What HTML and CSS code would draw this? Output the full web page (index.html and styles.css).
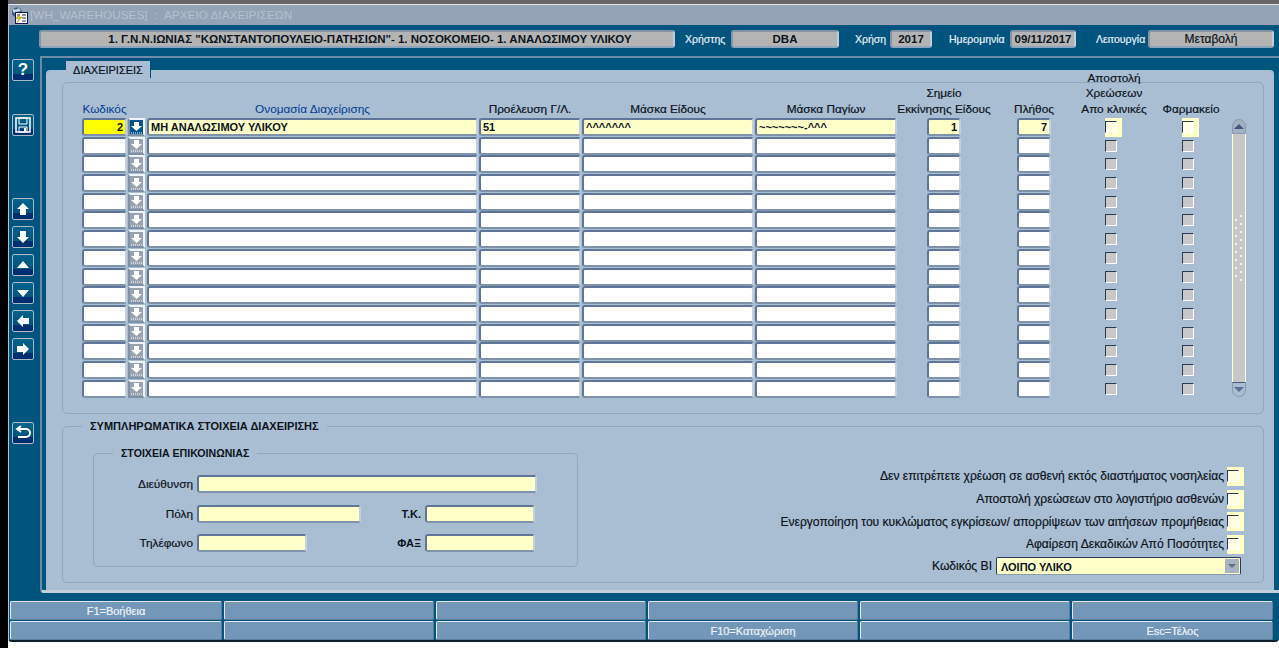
FILE: index.html
```html
<!DOCTYPE html>
<html lang="el">
<head>
    <meta charset="UTF-8">
    <title>[WH_WAREHOUSES] : ΑΡΧΕΙΟ ΔΙΑΧΕΙΡΙΣΕΩΝ</title>
    <link rel="stylesheet" href="styles.css">
</head>
<body>
    <svg class="defs" width="0" height="0">
        <symbol id="lov" viewBox="0 0 13 13">
            <path d="M4 1h5v4h3L6.500 10 1 5h3z" fill="#fff"/>
            <path d="M1 12h1M3 12h1M5 12h1M7 12h1M9 12h1M11 12h1" stroke="#fff" stroke-width="1"/>
        </symbol>
    </svg>

    <div class="edge"></div>
    <div class="screen">
        <div class="strip"></div>
        <div class="window">
            <div class="titlebar">
                <svg class="app-icon" width="17" height="17" viewBox="0 0 17 17">
                    <circle cx="6" cy="5.500" r="5" fill="#2b5c8c"/>
                    <path d="M2 2c2 1 4 0 6-1l2 3-4 1-1 2-3-2z" fill="#c8d4dc"/>
                    <rect x="4.500" y="5.500" width="12" height="11" fill="#fff" stroke="#101c50"/>
                    <path d="M6 8h3M11 8h4M11 11h4M11 14h4" stroke="#1c2c80"/>
                    <path d="M9 6.500l-4 5h3l-2 4 5-5.500H8z" fill="#f0d010" stroke="#806000" stroke-width=".4"/>
                </svg>
                <span class="title-text">[WH_WAREHOUSES]&nbsp; :&nbsp; ΑΡΧΕΙΟ ΔΙΑΧΕΙΡΙΣΕΩΝ</span>
            </div>

            <div class="header">
                <div class="info hospital">1. Γ.Ν.Ν.ΙΩΝΙΑΣ "ΚΩΝΣΤΑΝΤΟΠΟΥΛΕΙΟ-ΠΑΤΗΣΙΩΝ"- 1. ΝΟΣΟΚΟΜΕΙΟ- 1. ΑΝΑΛΩΣΙΜΟΥ ΥΛΙΚΟΥ</div>
                <span class="info-label label-user">Χρήστης</span>
                <div class="info user">DBA</div>
                <span class="info-label label-year">Χρήση</span>
                <div class="info year">2017</div>
                <span class="info-label label-date">Ημερομηνία</span>
                <div class="info date">09/11/2017</div>
                <span class="info-label label-mode">Λειτουργία</span>
                <div class="info mode">Μεταβολή</div>
            </div>

            <div class="workspace">
                <div class="toolbar">
                    <button class="tool help-tool">?</button>
                    <button class="tool save-tool">
                        <svg width="16" height="16" viewBox="0 0 16 16"><path d="M1 1h14v14H1z" fill="none" stroke="#fff" stroke-width="1.500"/><path d="M4 1h8v6H4zM4 10h8v5H4z" fill="none" stroke="#fff"/><path d="M9 11h2v3H9z" fill="#fff"/></svg>
                    </button>
                    <button class="tool nav-first">
                        <svg width="14" height="14" viewBox="0 0 14 14"><path d="M7 1l6 6H10v6H4V7H1z" fill="#fff"/></svg>
                    </button>
                    <button class="tool">
                        <svg width="14" height="14" viewBox="0 0 14 14"><path d="M4 1h6v6h3l-6 6-6-6h3z" fill="#fff"/></svg>
                    </button>
                    <button class="tool">
                        <svg width="14" height="14" viewBox="0 0 14 14"><path d="M7 3l6 7H1z" fill="#fff"/></svg>
                    </button>
                    <button class="tool">
                        <svg width="14" height="14" viewBox="0 0 14 14"><path d="M1 4h12l-6 7z" fill="#fff"/></svg>
                    </button>
                    <button class="tool">
                        <svg width="14" height="14" viewBox="0 0 14 14"><path d="M1 7l6-6v3h6v6H7v3z" fill="#fff"/></svg>
                    </button>
                    <button class="tool">
                        <svg width="14" height="14" viewBox="0 0 14 14"><path d="M13 7L7 1v3H1v6h6v3z" fill="#fff"/></svg>
                    </button>
                    <button class="tool undo-tool">
                        <svg width="16" height="16" viewBox="0 0 16 16"><path d="M6 1L2 4l4 3M3 4h8a3.500 3.500 0 0 1 0 8H3" fill="none" stroke="#fff" stroke-width="2"/></svg>
                    </button>
                </div>

                <div class="canvas">
                    <div class="tab">ΔΙΑΧΕΙΡΙΣΕΙΣ</div>
                    <div class="panel">
                        <div class="group list-group">
                            <div class="grid">
                                <div class="head blue">Κωδικός</div>
                                <div></div>
                                <div class="head blue">Ονομασία Διαχείρισης</div>
                                <div class="head">Προέλευση Γ/Λ.</div>
                                <div class="head">Μάσκα Είδους</div>
                                <div class="head w-mask">Μάσκα Παγίων</div>
                                <div class="head w-num">Σημείο<br>Εκκίνησης Είδους</div>
                                <div class="head w-num">Πλήθος</div>
                                <div class="head w-chk">Αποστολή<br>Χρεώσεων<br>Απο κλινικές</div>
                                <div class="head w-chk">Φαρμακείο</div>
                                <div class="scrollbar">
                                    <div class="scroll-btn scroll-up"></div>
                                    <div class="scroll-track"><div class="scroll-grip"></div></div>
                                    <div class="scroll-btn scroll-down"></div>
                                </div>

                                <div class="field code current">2</div><button class="lov active"><svg width="13" height="13"><use href="#lov"/></svg></button><div class="field req">ΜΗ ΑΝΑΛΩΣΙΜΟΥ ΥΛΙΚΟΥ</div><div class="field req">51</div><div class="field req">^^^^^^^</div><div class="field req w-mask">~~~~~~~-^^^</div><div class="field req num w-num">1</div><div class="field req num w-num">7</div><div class="chk-on"><span></span></div><div class="chk-on"><span></span></div>
                                <div class="field"></div><button class="lov"><svg width="13" height="13"><use href="#lov"/></svg></button><div class="field"></div><div class="field"></div><div class="field"></div><div class="field w-mask"></div><div class="field w-num"></div><div class="field w-num"></div><div class="chk"></div><div class="chk"></div>
                                <div class="field"></div><button class="lov"><svg width="13" height="13"><use href="#lov"/></svg></button><div class="field"></div><div class="field"></div><div class="field"></div><div class="field w-mask"></div><div class="field w-num"></div><div class="field w-num"></div><div class="chk"></div><div class="chk"></div>
                                <div class="field"></div><button class="lov"><svg width="13" height="13"><use href="#lov"/></svg></button><div class="field"></div><div class="field"></div><div class="field"></div><div class="field w-mask"></div><div class="field w-num"></div><div class="field w-num"></div><div class="chk"></div><div class="chk"></div>
                                <div class="field"></div><button class="lov"><svg width="13" height="13"><use href="#lov"/></svg></button><div class="field"></div><div class="field"></div><div class="field"></div><div class="field w-mask"></div><div class="field w-num"></div><div class="field w-num"></div><div class="chk"></div><div class="chk"></div>
                                <div class="field"></div><button class="lov"><svg width="13" height="13"><use href="#lov"/></svg></button><div class="field"></div><div class="field"></div><div class="field"></div><div class="field w-mask"></div><div class="field w-num"></div><div class="field w-num"></div><div class="chk"></div><div class="chk"></div>
                                <div class="field"></div><button class="lov"><svg width="13" height="13"><use href="#lov"/></svg></button><div class="field"></div><div class="field"></div><div class="field"></div><div class="field w-mask"></div><div class="field w-num"></div><div class="field w-num"></div><div class="chk"></div><div class="chk"></div>
                                <div class="field"></div><button class="lov"><svg width="13" height="13"><use href="#lov"/></svg></button><div class="field"></div><div class="field"></div><div class="field"></div><div class="field w-mask"></div><div class="field w-num"></div><div class="field w-num"></div><div class="chk"></div><div class="chk"></div>
                                <div class="field"></div><button class="lov"><svg width="13" height="13"><use href="#lov"/></svg></button><div class="field"></div><div class="field"></div><div class="field"></div><div class="field w-mask"></div><div class="field w-num"></div><div class="field w-num"></div><div class="chk"></div><div class="chk"></div>
                                <div class="field"></div><button class="lov"><svg width="13" height="13"><use href="#lov"/></svg></button><div class="field"></div><div class="field"></div><div class="field"></div><div class="field w-mask"></div><div class="field w-num"></div><div class="field w-num"></div><div class="chk"></div><div class="chk"></div>
                                <div class="field"></div><button class="lov"><svg width="13" height="13"><use href="#lov"/></svg></button><div class="field"></div><div class="field"></div><div class="field"></div><div class="field w-mask"></div><div class="field w-num"></div><div class="field w-num"></div><div class="chk"></div><div class="chk"></div>
                                <div class="field"></div><button class="lov"><svg width="13" height="13"><use href="#lov"/></svg></button><div class="field"></div><div class="field"></div><div class="field"></div><div class="field w-mask"></div><div class="field w-num"></div><div class="field w-num"></div><div class="chk"></div><div class="chk"></div>
                                <div class="field"></div><button class="lov"><svg width="13" height="13"><use href="#lov"/></svg></button><div class="field"></div><div class="field"></div><div class="field"></div><div class="field w-mask"></div><div class="field w-num"></div><div class="field w-num"></div><div class="chk"></div><div class="chk"></div>
                                <div class="field"></div><button class="lov"><svg width="13" height="13"><use href="#lov"/></svg></button><div class="field"></div><div class="field"></div><div class="field"></div><div class="field w-mask"></div><div class="field w-num"></div><div class="field w-num"></div><div class="chk"></div><div class="chk"></div>
                                <div class="field"></div><button class="lov"><svg width="13" height="13"><use href="#lov"/></svg></button><div class="field"></div><div class="field"></div><div class="field"></div><div class="field w-mask"></div><div class="field w-num"></div><div class="field w-num"></div><div class="chk"></div><div class="chk"></div>
                            </div>
                        </div>

                        <fieldset class="group extra-group">
                            <legend>ΣΥΜΠΛΗΡΩΜΑΤΙΚΑ ΣΤΟΙΧΕΙΑ ΔΙΑΧΕΙΡΙΣΗΣ</legend>
                            <div class="extra-body">
                                <fieldset class="group contact-group">
                                    <legend>ΣΤΟΙΧΕΙΑ ΕΠΙΚΟΙΝΩΝΙΑΣ</legend>
                                    <div class="contact-row row-address">
                                        <label class="contact-label">Διεύθυνση</label>
                                        <div class="field req w-address"></div>
                                    </div>
                                    <div class="contact-row row-city">
                                        <label class="contact-label">Πόλη</label>
                                        <div class="field req w-city"></div>
                                        <label class="contact-label short">Τ.Κ.</label>
                                        <div class="field req w-zip"></div>
                                    </div>
                                    <div class="contact-row row-phone">
                                        <label class="contact-label">Τηλέφωνο</label>
                                        <div class="field req w-phone"></div>
                                        <label class="contact-label short fax">ΦΑΞ</label>
                                        <div class="field req w-zip"></div>
                                    </div>
                                </fieldset>

                                <div class="options">
                                    <div class="option"><label>Δεν επιτρέπετε χρέωση σε ασθενή εκτός διαστήματος νοσηλείας</label><div class="chk-on"><span></span></div></div>
                                    <div class="option"><label>Αποστολή χρεώσεων στο λογιστήριο ασθενών</label><div class="chk-on"><span></span></div></div>
                                    <div class="option"><label>Ενεργοποίηση του κυκλώματος εγκρίσεων/ απορρίψεων των αιτήσεων προμήθειας</label><div class="chk-on"><span></span></div></div>
                                    <div class="option"><label>Αφαίρεση Δεκαδικών Από Ποσότητες</label><div class="chk-on"><span></span></div></div>
                                    <div class="option bi-row">
                                        <label>Κωδικός ΒΙ</label>
                                        <div class="select"><span class="select-text">ΛΟΙΠΟ ΥΛΙΚΟ</span><span class="select-arrow"></span></div>
                                    </div>
                                </div>
                            </div>
                        </fieldset>
                    </div>
                </div>
            </div>

            <div class="keys">
                <button class="key">F1=Βοήθεια</button>
                <button class="key"></button>
                <button class="key"></button>
                <button class="key"></button>
                <button class="key"></button>
                <button class="key"></button>
                <button class="key"></button>
                <button class="key"></button>
                <button class="key"></button>
                <button class="key">F10=Καταχώριση</button>
                <button class="key"></button>
                <button class="key">Esc=Τέλος</button>
            </div>
        </div>
    </div>
</body>
</html>
```
FILE: styles.css
```css
* {
    box-sizing: border-box;
}
html, body {
    margin: 0;
    height: 648px;
    overflow: hidden;
}
body {
    display: flex;
    background-color: #fff;
    font-family: "Liberation Sans", Arial, sans-serif;
    font-size: 11px;
    color: #0c1420;
}
.defs {
    position: absolute;
}
button {
    font-family: inherit;
    padding: 0;
}
.edge {
    width: 8px;
    background-color: #000;
}
.screen {
    width: 1271px;
}
.strip {
    height: 4px;
    background-color: #666;
}
.window {
    height: 638px;
    background-color: #00557f;
    border-left: 1px solid #b6c2ce;
    border-bottom: 2px solid #10202c;
    border-bottom-left-radius: 4px;
    border-bottom-right-radius: 4px;
}

/* title bar */
.titlebar {
    height: 21px;
    display: flex;
    align-items: center;
    background-color: #94a3b6;
    border-top: 1px solid #e4e8ee;
    padding-left: 2px;
}
.app-icon {
    flex: none;
}
.title-text {
    font-size: 11.800px;
    color: #b4bfcc;
    margin-left: 2px;
    white-space: pre;
}

/* header */
.header {
    display: flex;
    align-items: center;
    height: 18px;
    margin-top: 5px;
    padding-left: 30px;
}
.info {
    height: 18px;
    line-height: 15px;
    text-align: center;
    font-weight: bold;
    font-size: 11.500px;
    background-color: #b4b4b4;
    border: 2px solid;
    border-color: #8794a8 #c0ccd8 #8ea4bc #8794a8;
    border-radius: 3px;
}
.info-label {
    color: #e6edf3;
    font-size: 10.500px;
    -webkit-text-stroke: 0.2px #e6edf3;
    white-space: nowrap;
}
.hospital {
    width: 636px;
    padding-left: 26px;
}
.label-user {
    margin-left: 10px;
    width: 46px;
}
.user {
    width: 108px;
}
.label-year {
    margin-left: 16px;
    width: 35px;
}
.year {
    width: 42px;
}
.label-date {
    margin-left: 17px;
    width: 61px;
}
.date {
    width: 66px;
}
.label-mode {
    margin-left: 20px;
    width: 52px;
}
.mode {
    width: 126px;
    font-weight: normal;
    font-size: 12px;
    -webkit-text-stroke: 0.2px #0c1420;
}

/* left toolbar and canvas */
.workspace {
    display: flex;
    height: 537px;
    margin-top: 8px;
}
.toolbar {
    width: 31px;
    flex: none;
    display: flex;
    flex-direction: column;
    gap: 6px;
    padding: 3px 0 0 3px;
}
.tool {
    width: 22px;
    height: 22px;
    display: flex;
    align-items: center;
    justify-content: center;
    border: 1px solid #a9b9c8;
    border-radius: 2px;
    color: #fff;
    background: linear-gradient(#00628c 0%, #00557f 68%, #002e70 72%, #002e70 100%);
}
.help-tool {
    font-size: 17px;
    font-weight: bold;
}
.save-tool {
    margin-top: 27px;
}
.nav-first {
    margin-top: 56px;
}
.undo-tool {
    margin-top: 56px;
}
.canvas {
    flex: 1;
    border-top: 2px solid #6d8aa8;
    border-left: 2px solid #6d8aa8;
    border-bottom: 3px solid #c3cfda;
    border-bottom-left-radius: 4px;
    padding: 12px 5px 0 4px;
}
.tab {
    position: relative;
    width: 85px;
    height: 17px;
    margin: -9px 0 -8px 20px;
    line-height: 19px;
    text-align: center;
    background-color: #a9bed3;
    border-right: 1px solid #00507a;
    font-size: 11px;
    -webkit-text-stroke: 0.2px #0c1420;
}
.panel {
    height: 520px;
    background-color: #a9bed3;
    border-radius: 4px 4px 0 0;
    padding: 12px 10px 0 16px;
}

/* groups */
.group {
    margin: 0;
    padding: 0;
    min-width: 0;
    border: 1px solid #93a7bc;
    border-radius: 5px;
}
.group legend {
    padding: 0 8px;
    margin-left: 19px;
    line-height: 14px;
    font-weight: bold;
    font-size: 11px;
}
.list-group {
    height: 332px;
}
.extra-group {
    height: 164px;
    margin-top: 5px;
}
.contact-group legend {
    margin-left: 19px;
    font-size: 10.600px;
}

/* list */
.grid {
    display: grid;
    grid-template-columns: 46px 19px 332px 103px 173px 172px 90px 88px 77px 50px 14px;
    grid-template-rows: 35px repeat(15, 18.7px);
    margin-left: 19px;
}
.head {
    display: flex;
    align-items: flex-end;
    justify-content: center;
    width: calc(100% - 1px);
    text-align: center;
    white-space: nowrap;
    line-height: 15.500px;
    padding-bottom: 1px;
    font-size: 11.800px;
    -webkit-text-stroke: 0.2px #0c1420;
}
.blue {
    color: #003c90;
    -webkit-text-stroke: 0;
}
.field {
    height: 18px;
    width: calc(100% - 1px);
    padding: 0 2px;
    line-height: 15px;
    background-color: #fff;
    border: 2px solid;
    border-color: #5f7698 #c4d0dc #7f93ab #5f7698;
    border-radius: 3px;
    font-weight: bold;
    white-space: nowrap;
    overflow: hidden;
}
.req {
    background-color: #ffffc8;
}
.current {
    background-color: #ffff00;
}
.code, .num {
    text-align: right;
}
.w-mask {
    width: 142px;
}
.w-num {
    width: 34px;
}
.w-chk {
    width: 18px;
}
.lov {
    width: 17px;
    height: 18px;
    display: flex;
    align-items: center;
    justify-content: center;
    background-color: #98a3af;
    border: 2px solid #f0f4f8;
    border-left-color: #7c90a8;
    border-bottom-color: #7c90a8;
}
.lov.active {
    background-color: #00558c;
}
.chk {
    width: 12px;
    height: 12px;
    margin-top: 3px;
    background-color: #c8c8c8;
    border: 1px solid;
    border-color: #2c3c50 #fff #fff #2c3c50;
}
.chk-on {
    width: 17px;
    height: 19px;
    background-color: #ffffc8;
    padding-top: 3px;
}
.chk-on span {
    display: block;
    width: 12px;
    height: 12px;
    background-color: #ffffe4;
    border: 1px solid;
    border-color: #2c3c50 #fff #fff #2c3c50;
}

/* scrollbar */
.scrollbar {
    grid-column: 11;
    grid-row: 1 / span 16;
    display: flex;
    flex-direction: column;
    padding-top: 36px;
    height: 314px;
}
.scroll-btn {
    height: 15px;
    flex: none;
    display: flex;
    align-items: center;
    justify-content: center;
    border: 1px solid #8b9cb0;
}
.scroll-btn::after {
    content: "";
    border-left: 5px solid transparent;
    border-right: 5px solid transparent;
}
.scroll-up {
    background-color: #a2b2c4;
    border-radius: 7px 7px 0 0;
}
.scroll-up::after {
    border-bottom: 5px solid #44597c;
}
.scroll-down {
    background-color: #a9bed3;
    border-radius: 0 0 7px 7px;
    border-top-color: #44597c;
}
.scroll-down::after {
    border-top: 5px solid #5c7096;
}
.scroll-track {
    flex: 1;
    background-color: #c8c8c8;
    border-left: 1px solid #ffffe0;
    border-right: 1px solid #ffffe0;
}
.scroll-grip {
    width: 8px;
    height: 66px;
    margin: 81px 0 0 2px;
    background-image:
        radial-gradient(circle at 1px 1px, #f2f2f2 1.400px, transparent 1.500px),
        radial-gradient(circle at 1px 1px, #f2f2f2 1.400px, transparent 1.500px);
    background-size: 8px 8px;
    background-position: 0 4px, 5px 0;
}

/* bottom part */
.extra-body {
    display: flex;
    justify-content: space-between;
    padding: 13px 19px 0 30px;
}
.contact-group {
    width: 485px;
    height: 121px;
}
.contact-row {
    display: flex;
    align-items: center;
    gap: 4px;
}
.row-address {
    margin-top: 15px;
}
.row-city {
    margin-top: 12px;
}
.row-phone {
    margin-top: 11px;
}
.contact-label {
    width: 99px;
    text-align: right;
    white-space: nowrap;
    font-size: 11.800px;
    -webkit-text-stroke: 0.2px #0c1420;
}
.short {
    width: 56px;
    font-size: 11px;
    font-weight: bold;
    -webkit-text-stroke: 0;
}
.fax {
    width: 110px;
}
.w-address {
    width: 340px;
}
.w-city {
    width: 164px;
}
.w-zip {
    width: 110px;
}
.w-phone {
    width: 110px;
}
.options {
    display: flex;
    flex-direction: column;
    align-items: flex-end;
    padding-top: 19px;
}
.option {
    display: flex;
    align-items: center;
    gap: 3px;
    height: 22.700px;
    white-space: nowrap;
    font-size: 12.100px;
    -webkit-text-stroke: 0.2px #0c1420;
}
.option .chk-on {
    padding-top: 3px;
}
.bi-row {
    height: 18px;
    margin: 1px 3px 0 0;
    gap: 4px;
}
.select {
    width: 245px;
    height: 18px;
    display: flex;
    align-items: flex-end;
    justify-content: space-between;
    background-color: #ffffc8;
    border: 1px solid #2c3c58;
    border-bottom-color: #8a9cb0;
    border-radius: 2px;
    overflow: hidden;
    font-size: 11px;
}
.select-text {
    font-weight: bold;
    -webkit-text-stroke: 0;
    margin: 0 0 1px 4px;
}
.select-arrow {
    width: 14px;
    height: 14px;
    margin: 0 1px 1px 0;
    display: flex;
    align-items: center;
    justify-content: center;
    background-color: #a8b2c0;
}
.select-arrow::after {
    content: "";
    border-left: 4px solid transparent;
    border-right: 4px solid transparent;
    border-top: 4px solid #5c6c88;
}

/* function keys */
.keys {
    display: grid;
    grid-template-columns: 212px 210px 210px 210px 210px 201px;
    grid-auto-rows: 19px;
    gap: 1px 2px;
    margin: 8px 0 0 1px;
}
.key {
    background-color: #7397b8;
    color: #eef2f6;
    font-size: 11px;
    -webkit-text-stroke: 0.2px #eef2f6;
    border: 1px solid;
    border-color: #dfe8f0 #5d7d9c #5d7d9c #dfe8f0;
    border-radius: 2px;
}
```
